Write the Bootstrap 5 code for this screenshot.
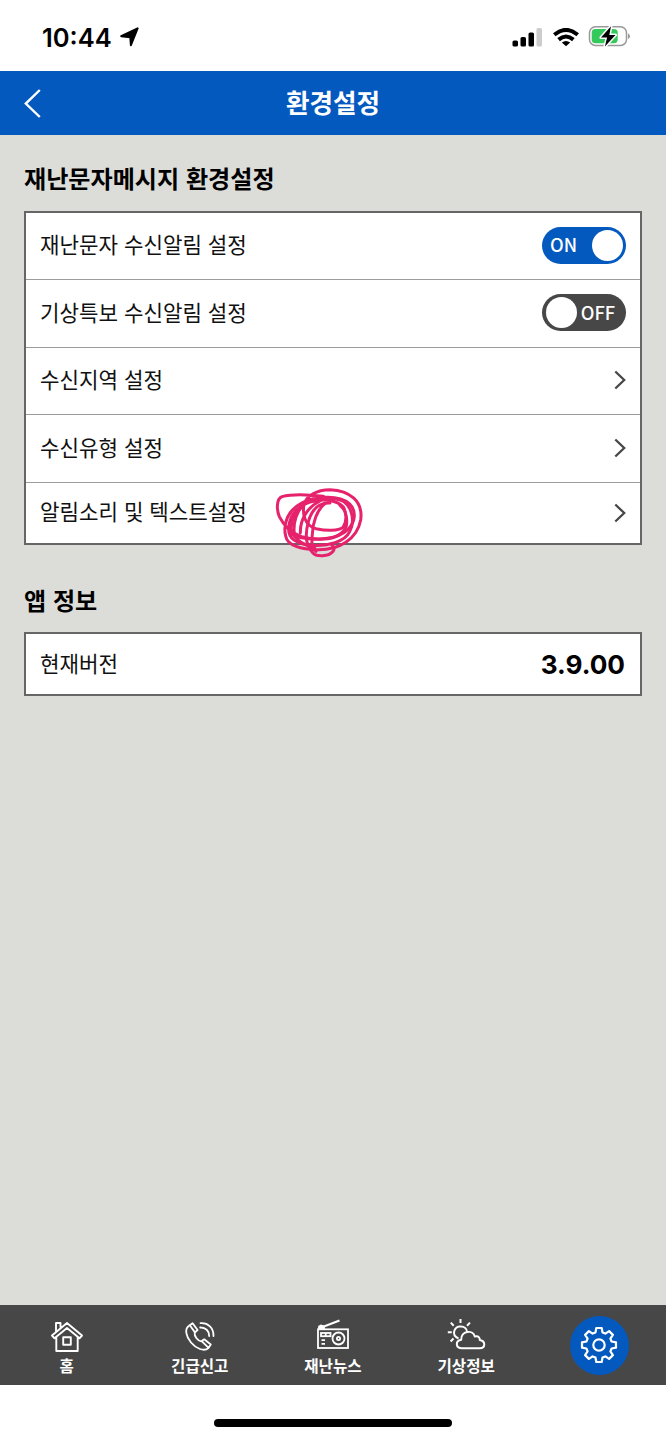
<!DOCTYPE html>
<html lang="ko">
<head>
<meta charset="utf-8">
<meta name="viewport" content="width=device-width, initial-scale=1">
<title>환경설정</title>
<link rel="stylesheet" href="https://cdn.jsdelivr.net/npm/bootstrap@5.3.0/dist/css/bootstrap.min.css">
<style>
  body { font-family: "Noto Sans CJK KR", sans-serif; color: #111; height: 1440px; background: #fff; }
  svg { display: block; flex: none; }
  .status { height: 71px; padding: 3px 35px 0 42px; color: #000; }
  .clock { font: 600 25.5px/1 Inter, sans-serif; padding-top: 1px; }
  .topbar { height: 64px; background: #0459bf; color: #fff; }
  .topbar h1 { font-size: 25.6px; font-weight: 700; line-height: 1; padding-bottom: 2px; }
  .back { left: 24px; top: 18px; }
  .page { background: #dcdcd9; padding: 0 24px; }
  .page h2 { font-size: 24.1px; font-weight: 700; line-height: 1; color: #000; }
  .h-first { padding-top: 31px; height: 76px; }
  .h-second { padding-top: 43px; height: 87px; }
  .settings { border: 2px solid #666; border-radius: 0; width: 618px; --bs-list-group-bg: #fff; }
  .settings .list-group-item { border: 0; border-radius: 0; padding: 0 14px 1px; height: 67.6px; font-size: 21.2px; line-height: 1; color: #111; }
  .settings .list-group-item:first-child { height: 66px; }
  .settings .list-group-item + .list-group-item { border-top: 1px solid #9c9c9c; }
  .settings .list-group-item:last-child { height: 61.5px; }
  .settings .list-group-item:only-child { height: 60px; }
  .item-label { margin-bottom: 3px; }
  .toggle { width: 84px; height: 37px; border-radius: 19px; padding: 0 3.5px 0 8px; font: 500 18.2px/1 "Noto Sans CJK KR", sans-serif; color: #fff; background: #0459bf; }
  .toggle span { margin-bottom: 2px; }
  .toggle i { width: 31px; height: 31px; border-radius: 50%; background: #fff; }
  .toggle.off { background: #474747; padding: 0 11px 0 3.5px; }
  .version { font: 700 26.2px/1 Inter, sans-serif; color: #000; padding-top: 3px; margin-right: 1px; }
  .scribble { left: 275px; top: 486px; z-index: 3; }
  .tabs { height: 80.5px; background: #474747; color: #fff; font-size: 15.6px; font-weight: 700; line-height: 1; }
  .tabs a { width: 20%; color: #fff; text-decoration: none; padding-top: 12px; }
  .tabs span { margin-top: 3px; }
  .gear { width: 59px; height: 59px; background: #0459bf; margin-top: -1px; }
  .homebar { height: 55px; padding-top: 34px; }
  .homebar div { width: 238px; height: 8px; background: #000; border-radius: 4px; }
</style>
</head>
<body class="d-flex flex-column position-relative overflow-hidden">
<header class="status d-flex align-items-center">
  <span class="clock">10:44</span>
  <svg class="ms-2" width="20" height="20" viewBox="0 0 20 20"><path d="M1.2 9.2L17.6 1.4L10.9 18.2L10.3 10.2Z" stroke="#000" stroke-width="2" stroke-linejoin="round"/></svg>
  <svg class="ms-auto" width="30" height="19" viewBox="0 0 30 19"><rect x=".5" y="12.5" width="5.5" height="6" rx="1.6"/><rect x="8.5" y="9" width="5.5" height="9.5" rx="1.6"/><rect x="16.5" y="4.5" width="5.5" height="14" rx="1.6"/><rect x="24.5" y="0" width="5.5" height="18.5" rx="1.6" fill="#ccc"/></svg>
  <svg style="margin-left:11px" width="26" height="19" viewBox="0 0 26 19" fill="none" stroke="#000" stroke-width="4"><path d="M1.3 6.8Q13-3 24.7 6.8"/><path d="M5.6 11.6Q13 5.4 20.4 11.6"/><path d="M13 18.3L8.8 14.4Q13 11.4 17.2 14.4Z" fill="#000" stroke="none"/></svg>
  <svg style="margin-left:9px" width="43" height="24" viewBox="0 0 43 24"><rect x="1.5" y="1.8" width="37" height="18.6" rx="6" fill="#fff" stroke="#999" stroke-width="1.5"/><path d="M40 8.3Q44 11.2 40 14.2Z" fill="#999"/><rect x="3.7" y="4" width="26" height="14.2" rx="3.6" fill="#34ca5b"/><path d="M23 1.2L13 12.6H19.1L16.9 21.6L27.5 10.1H21.3Z" stroke="#fff" stroke-width="3" paint-order="stroke" stroke-linejoin="round"/></svg>
</header>
<nav class="topbar position-relative d-flex align-items-center justify-content-center">
  <svg class="back position-absolute" width="18" height="30" viewBox="0 0 18 30" fill="none" stroke="#fff" stroke-width="2.4"><path d="M15.8 1L1.8 14.6L15.8 28"/></svg>
  <h1 class="m-0">환경설정</h1>
</nav>
<main class="page flex-grow-1">
  <h2 class="h-first m-0">재난문자메시지 환경설정</h2>
  <div class="list-group settings">
    <div class="list-group-item d-flex align-items-center justify-content-between"><span class="item-label">재난문자 수신알림 설정</span><div class="toggle d-flex align-items-center justify-content-between"><span>ON</span><i></i></div></div>
    <div class="list-group-item d-flex align-items-center justify-content-between"><span class="item-label">기상특보 수신알림 설정</span><div class="toggle off d-flex align-items-center justify-content-between"><i></i><span>OFF</span></div></div>
    <div class="list-group-item d-flex align-items-center justify-content-between"><span class="item-label">수신지역 설정</span><svg width="12" height="20" viewBox="0 0 12 20" fill="none" stroke="#474747" stroke-width="2.3"><path d="M1.3 1.5L10.2 10L1.3 18.5"/></svg></div>
    <div class="list-group-item d-flex align-items-center justify-content-between"><span class="item-label">수신유형 설정</span><svg width="12" height="20" viewBox="0 0 12 20" fill="none" stroke="#474747" stroke-width="2.3"><path d="M1.3 1.5L10.2 10L1.3 18.5"/></svg></div>
    <div class="list-group-item d-flex align-items-center justify-content-between"><span class="item-label">알림소리 및 텍스트설정</span><svg width="12" height="20" viewBox="0 0 12 20" fill="none" stroke="#474747" stroke-width="2.3"><path d="M1.3 1.5L10.2 10L1.3 18.5"/></svg></div>
  </div>
  <h2 class="h-second m-0">앱 정보</h2>
  <div class="list-group settings">
    <div class="list-group-item d-flex align-items-center justify-content-between"><span class="item-label">현재버전</span><span class="version">3.9.00</span></div>
  </div>
</main>
<!-- hand-drawn marker over the last setting -->
<svg class="scribble position-absolute" width="90" height="72" viewBox="45 33 270 216" fill="none" stroke="#e5226b" stroke-width="9" stroke-linecap="round" stroke-linejoin="round">
  <path d="M190 64C140 58 95 57 66 65C48 72 50 105 58 125C70 150 95 175 125 185C175 198 235 192 262 165C290 138 288 105 268 86C240 62 170 60 125 84C85 104 68 145 77 183C82 212 125 224 170 224C240 226 292 190 302 135C310 80 270 46 210 44C170 44 140 62 132 88C126 120 136 153 168 161C200 168 235 168 249 157C262 140 259 112 250 96C230 74 190 72 165 78"/>
  <path d="M165 78C120 85 88 115 86 160C84 190 110 207 155 211C205 214 255 200 269 170C285 140 277 98 252 80C220 65 165 66 135 86C110 105 97 145 104 184"/>
  <path d="M180 78C145 95 120 130 121 174M210 84C175 82 156 104 146 137C135 175 136 211 158 233C170 247 206 244 218 230C225 222 223 216 216 211"/>
  <path d="M196 85C170 104 158 145 157 178C154 205 155 220 168 229M240 91C258 106 263 131 259 153C252 175 225 191 192 192C150 194 108 189 91 176M120 100C103 116 91 140 94 170M91 150C97 185 120 209 164 218"/>
</svg>
<nav class="tabs d-flex">
  <a href="#" class="d-flex flex-column align-items-center">
    <svg width="34" height="38" viewBox="0 0 34 38" fill="none" stroke="#fff" stroke-width="1.9" stroke-linejoin="round"><path d="M6.3 20V34H27.7V20M6 15V6H10.5V10.5M17 6L32 18.5L29.5 21.3L17 11L4.5 21.3L2 18.5Z"/><path d="M13.2 20.2H20.8V27.8H13.2Z"/></svg><span>홈</span></a>
  <a href="#" class="d-flex flex-column align-items-center">
    <svg width="34" height="38" viewBox="0 0 34 38" fill="none" stroke="#fff" stroke-width="1.8" stroke-linejoin="round" stroke-linecap="round"><path d="M6 8.8L9.6 6.2L14.6 13L11.7 15.6C11 19 15 24.5 18.4 24.3L21.2 22.3L27.8 27.5L25.5 31C21 35 13 31.5 8 25.5C3 19.5 1.3 12 6 8.8ZM7.3 9L12 15.4M19 24.3L25.3 30.6M17.5 6.2C25 5.5 30.8 11 30.5 19M17.2 10.5C22.5 10.2 26.3 14 26.2 19"/></svg><span>긴급신고</span></a>
  <a href="#" class="d-flex flex-column align-items-center">
    <svg width="34" height="38" viewBox="0 0 34 38" fill="none" stroke="#fff" stroke-width="1.8"><rect x="2" y="12.3" width="30" height="18.7"/><path d="M4 11L23.5 3.5" stroke-width="2"/><path d="M3 12V9.5L5 8.5L8 9.5V12Z" fill="#fff"/><circle cx="22.5" cy="21.5" r="6"/><circle cx="22.5" cy="21.5" r="1.6"/><rect x="5" y="16" width="9.5" height="3.2"/><path d="M9.7 16V19M5.5 23.2H9M5.5 26.8H9"/></svg><span>재난뉴스</span></a>
  <a href="#" class="d-flex flex-column align-items-center">
    <svg width="40" height="38" viewBox="0 0 40 38" fill="none" stroke="#fff" stroke-width="2" stroke-linejoin="round"><path d="M16 31.2C9.5 31.2 9 24 15.2 22.8C14.8 14 26.8 12 28.8 19.6C33 18.4 34 21.6 33.7 23C40 24 39.5 31.2 33.8 31.2Z"/><path d="M12.5 21.5C4.5 18 8.5 9 14.6 9.5C18.2 9.3 20.8 11.8 21.2 15M14.5 6V2M7.7 8.7L4.8 5.6M21 8.7L24 5.6M5.8 15.3H1.8M7.5 21.5L4.6 24.5"/></svg><span>기상정보</span></a>
  <a href="#" class="d-flex flex-column align-items-center">
    <div class="gear rounded-circle d-flex align-items-center justify-content-center">
      <svg width="38" height="38" viewBox="-19 -19 38 38" fill="none" stroke="#fff" stroke-width="2.2" stroke-linejoin="round"><path d="M-2.7-17H2.7L3.5-12.6L6.4-11.4L10.1-13.9L13.9-10.1L11.4-6.4L12.6-3.5L17-2.7V2.7L12.6 3.5L11.4 6.4L13.9 10.1L10.1 13.9L6.4 11.4L3.5 12.6L2.7 17H-2.7L-3.5 12.6L-6.4 11.4L-10.1 13.9L-13.9 10.1L-11.4 6.4L-12.6 3.5L-17 2.7V-2.7L-12.6-3.5L-11.4-6.4L-13.9-10.1L-10.1-13.9L-6.4-11.4L-3.5-12.6Z"/><circle r="5.7"/></svg>
    </div></a>
</nav>
<footer class="homebar d-flex justify-content-center"><div></div></footer>
<script src="https://cdn.jsdelivr.net/npm/bootstrap@5.3.0/dist/js/bootstrap.bundle.min.js"></script>
</body>
</html>
